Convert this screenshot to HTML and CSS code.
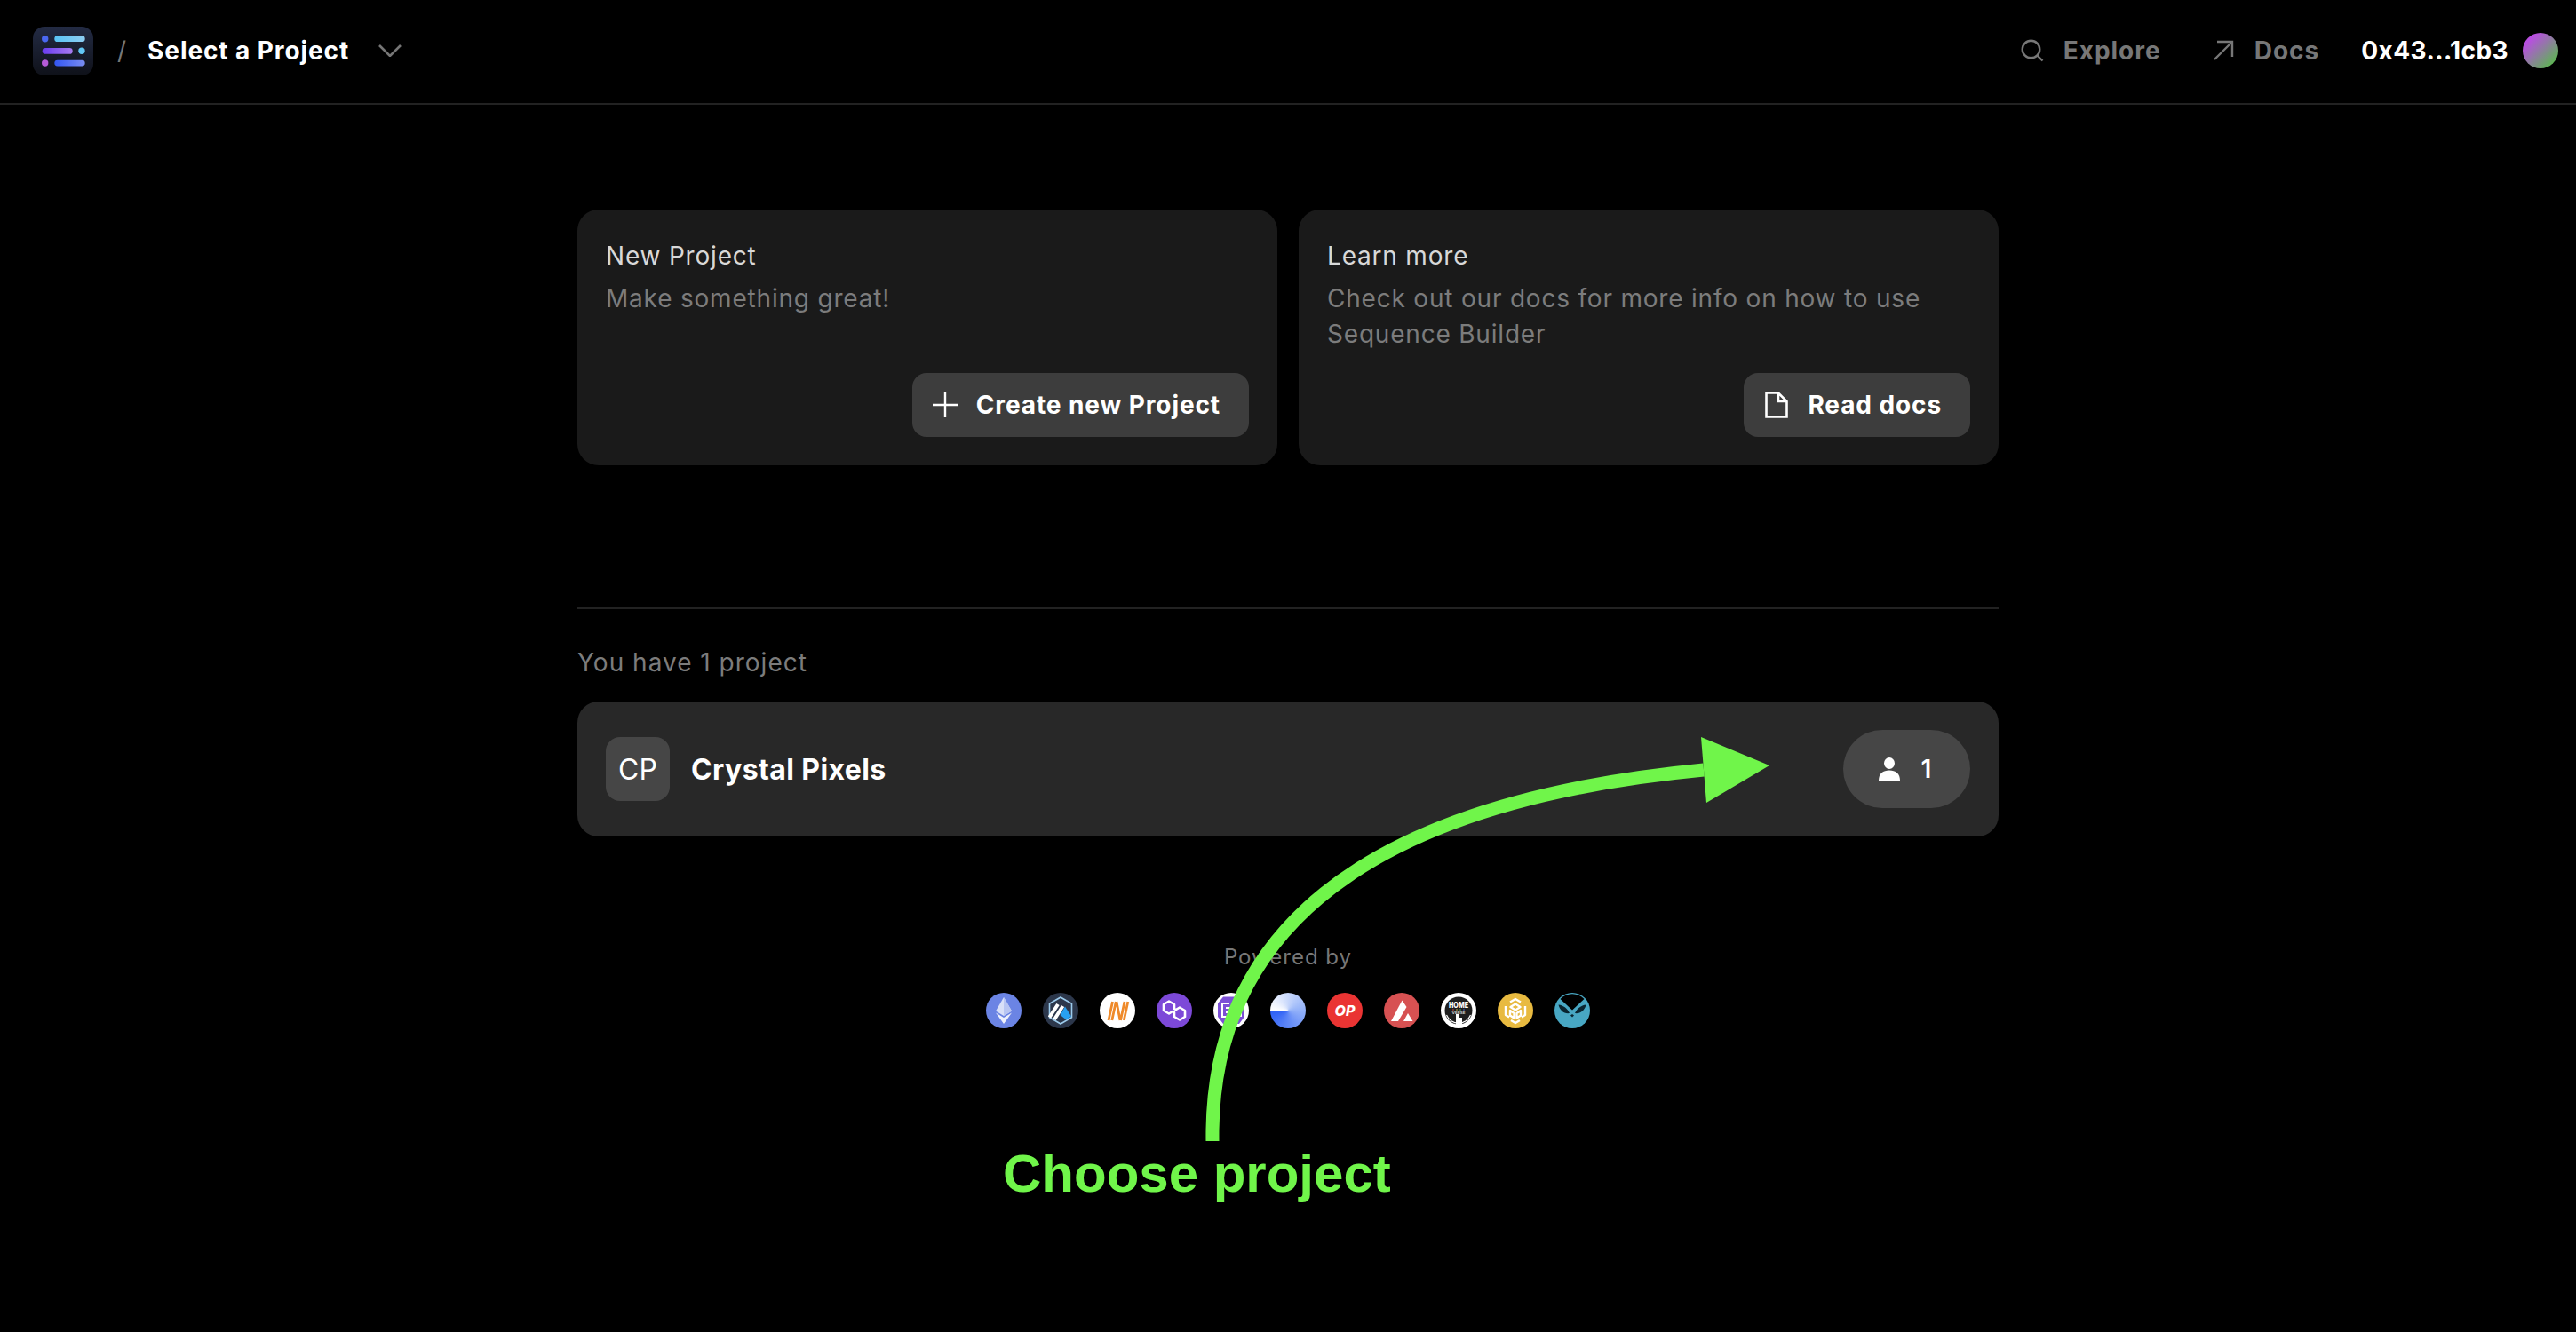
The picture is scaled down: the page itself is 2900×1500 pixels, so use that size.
FILE: index.html
```html
<!DOCTYPE html>
<html lang="en">

<head>
    <meta charset="UTF-8">
    <meta name="viewport" content="width=device-width, initial-scale=1.0">
    <title>Sequence Builder - Select a Project</title>
    <link rel="stylesheet" href="styles.css">
</head>

<body>
    <header class="topbar">
        <div class="topbar-left">
            <svg class="logo" viewBox="0 0 68 55" xmlns="http://www.w3.org/2000/svg">
                <defs>
                    <linearGradient id="logoBg" x1="0" y1="0" x2="0" y2="1">
                        <stop offset="0" stop-color="#232b44" />
                        <stop offset="1" stop-color="#0f1119" />
                    </linearGradient>
                    <linearGradient id="barCyan" x1="0" y1="0" x2="1" y2="0">
                        <stop offset="0" stop-color="#59c4f5" />
                        <stop offset="1" stop-color="#8ecdf2" />
                    </linearGradient>
                    <linearGradient id="barPurple" x1="0" y1="0" x2="1" y2="0">
                        <stop offset="0" stop-color="#6a3cf0" />
                        <stop offset="1" stop-color="#a77bf0" />
                    </linearGradient>
                    <linearGradient id="barBlue" x1="0" y1="0" x2="1" y2="0">
                        <stop offset="0" stop-color="#3356f2" />
                        <stop offset="1" stop-color="#7a8df0" />
                    </linearGradient>
                </defs>
                <rect width="68" height="55" rx="13" fill="url(#logoBg)" />
                <circle cx="13.7" cy="13.7" r="3.7" fill="#4a68f0" />
                <rect x="24.3" y="10.3" width="34.4" height="6.8" rx="3.4" fill="url(#barCyan)" />
                <rect x="10.7" y="24" width="34" height="6.8" rx="3.4" fill="url(#barPurple)" />
                <circle cx="55" cy="27.3" r="3.7" fill="#62c6f4" />
                <circle cx="13.7" cy="41" r="3.7" fill="#b65bd8" />
                <rect x="24.3" y="37.7" width="34.4" height="6.8" rx="3.4" fill="url(#barBlue)" />
            </svg>
            <span class="crumb-slash">/</span>
            <span class="crumb-title">Select a Project</span>
            <svg class="chevron" viewBox="0 0 26 14" xmlns="http://www.w3.org/2000/svg">
                <path d="M1 1 L13 13 L25 1" fill="none" stroke="#767676" stroke-width="2.6" />
            </svg>
        </div>
        <nav class="topbar-right">
            <a class="nav-link" href="#">
                <svg class="nav-icon" viewBox="0 0 26 26" xmlns="http://www.w3.org/2000/svg">
                    <circle cx="11.5" cy="11.5" r="9.8" fill="none" stroke="#777" stroke-width="2.4" />
                    <path d="M18.5 18.5 L24.5 24.5" stroke="#777" stroke-width="2.4" />
                </svg>
                Explore
            </a>
            <a class="nav-link" href="#">
                <svg class="nav-icon" viewBox="0 0 26 26" xmlns="http://www.w3.org/2000/svg">
                    <path d="M3 23 L23 3 M6 3 L23 3 L23 20" fill="none" stroke="#777" stroke-width="2.4" />
                </svg>
                Docs
            </a>
            <div class="wallet">
                <span class="wallet-address">0x43...1cb3</span>
                <span class="wallet-avatar"></span>
            </div>
        </nav>
    </header>

    <main class="content">
        <section class="cards">
            <article class="card">
                <div>
                    <h3 class="card-title">New Project</h3>
                    <p class="card-text">Make something great!</p>
                </div>
                <a class="card-button card-button-create" href="#">
                    <svg class="button-icon" viewBox="0 0 30 30" xmlns="http://www.w3.org/2000/svg">
                        <path d="M15 1 V29 M1 15 H29" stroke="#fff" stroke-width="2.4" />
                    </svg>
                    Create new Project
                </a>
            </article>
            <article class="card">
                <div>
                    <h3 class="card-title">Learn more</h3>
                    <p class="card-text">Check out our docs for more info on how to use<br>Sequence Builder</p>
                </div>
                <a class="card-button card-button-docs" href="#">
                    <svg class="button-icon button-icon-doc" viewBox="0 0 26 30" xmlns="http://www.w3.org/2000/svg">
                        <path d="M1.5 1.5 H15 L24.5 11 V28.5 H1.5 Z M15 1.5 V11 H24.5" fill="none" stroke="#fff" stroke-width="2.6" />
                    </svg>
                    Read docs
                </a>
            </article>
        </section>

        <hr class="divider">

        <p class="project-count">You have 1 project</p>

        <a class="project-row" href="#">
            <div class="project-info">
                <span class="project-tile">CP</span>
                <span class="project-name">Crystal Pixels</span>
            </div>
            <span class="member-pill">
                <svg class="member-icon" viewBox="0 0 24 26" xmlns="http://www.w3.org/2000/svg">
                    <ellipse cx="12" cy="6.5" rx="6" ry="6.5" fill="#fff" />
                    <path d="M0 26 C0 18 5 14.5 12 14.5 C19 14.5 24 18 24 26 Z" fill="#fff" />
                </svg>
                1
            </span>
        </a>

        <footer class="powered">
            <p class="powered-label">Powered by</p>
            <div class="chains">
                <svg class="chain" viewBox="0 0 40 40" xmlns="http://www.w3.org/2000/svg">
                    <circle cx="20" cy="20" r="20" fill="#6b84e4" />
                    <path d="M20 5 L11 20.5 L20 26 L29 20.5 Z" fill="#d9e0f8" />
                    <path d="M20 5 L20 26 L29 20.5 Z" fill="#b8c5f2" />
                    <path d="M11 22.5 L20 35 L29 22.5 L20 28 Z" fill="#eef1fc" />
                </svg>
                <svg class="chain" viewBox="0 0 40 40" xmlns="http://www.w3.org/2000/svg">
                    <circle cx="20" cy="20" r="20" fill="#2c374b" />
                    <path d="M20 5 L32.5 12.2 V27.8 L20 35 L7.5 27.8 V12.2 Z" fill="none" stroke="#9dcced" stroke-width="1.6" />
                    <path d="M7.5 27.5 L17 13 M13 30 L22.5 15" fill="none" stroke="#fff" stroke-width="4" />
                    <path d="M25 15.5 L32 26.5 L26.5 30.5 L19.5 25 Z" fill="#28a0f0" />
                </svg>
                <svg class="chain" viewBox="0 0 40 40" xmlns="http://www.w3.org/2000/svg">
                    <circle cx="20" cy="20" r="20" fill="#fff" />
                    <path d="M10 31 L14.5 10 M13.8 31 L18.3 10 M19 10 L23 31 M23.5 31 L28 10 M27.3 31 L31.8 10" fill="none" stroke="#ef8a2a" stroke-width="2.8" />
                </svg>
                <svg class="chain" viewBox="0 0 40 40" xmlns="http://www.w3.org/2000/svg">
                    <circle cx="20" cy="20" r="20" fill="#7d49d8" />
                    <path d="M14 9.5 L20 13 V18 L22 19 L26 16.5 L32 20 V27 L26 30.5 L20 27 V22 L18 21 L14 23.5 L8 20 V13 Z" fill="none" stroke="#fff" stroke-width="2.6" stroke-linejoin="round" />
                </svg>
                <svg class="chain" viewBox="0 0 40 40" xmlns="http://www.w3.org/2000/svg">
                    <circle cx="20" cy="20" r="20" fill="#fff" />
                    <path d="M11 4.5 H29 L35 12 V27 L29 35 H11 L5 27 V12 Z" fill="#7c4fd6" />
                    <path d="M10 12 H18 M10 12 V27 H18 M14 17 H19 V22 H14 M24 9 H30 V13 M22 14 V26 H31 V19 H26" fill="none" stroke="#fff" stroke-width="2" />
                </svg>
                <span class="chain chain-base"></span>
                <svg class="chain" viewBox="0 0 40 40" xmlns="http://www.w3.org/2000/svg">
                    <circle cx="20" cy="20" r="20" fill="#ea3433" />
                    <text class="chain-op" x="20" y="25.5" text-anchor="middle">OP</text>
                </svg>
                <svg class="chain" viewBox="0 0 40 40" xmlns="http://www.w3.org/2000/svg">
                    <circle cx="20" cy="20" r="20" fill="#d75152" />
                    <path d="M20.5 8.5 L25.5 16 L16 32 H8 Z" fill="#fff" />
                    <path d="M27 23 L32.5 32 H22 Z" fill="#fff" />
                </svg>
                <svg class="chain" viewBox="0 0 40 40" xmlns="http://www.w3.org/2000/svg">
                    <circle cx="20" cy="20" r="20" fill="#fff" />
                    <circle cx="20" cy="20" r="15.5" fill="#1e1e1e" />
                    <path d="M6.5 25 A14.5 14.5 0 0 0 33.5 25" fill="none" stroke="#fff" stroke-width="1.2" />
                    <text class="chain-home" x="20" y="17" text-anchor="middle" textLength="22" lengthAdjust="spacingAndGlyphs">HOME</text>
                    <circle cx="14" cy="19" r="0.8" fill="#e04a4a" />
                    <circle cx="18" cy="19" r="0.8" fill="#e0c04a" />
                    <circle cx="22" cy="19" r="0.8" fill="#4ac06a" />
                    <circle cx="26" cy="19" r="0.8" fill="#4a6ae0" />
                    <text class="chain-verse" x="20" y="23.5" text-anchor="middle" textLength="15" lengthAdjust="spacingAndGlyphs">VERSE</text>
                    <path d="M17 24 H20 V28 H24 V36 H17 Z" fill="#fff" />
                </svg>
                <svg class="chain" viewBox="0 0 40 40" xmlns="http://www.w3.org/2000/svg">
                    <circle cx="20" cy="20" r="20" fill="#e8ba40" />
                    <path d="M14 10.5 L20 7 L26 10.5 M14.5 16 L20 12.5 L25.5 16 L20 19.5 Z M9 15 V25 L13 27.5 M31 15 V25 L27 27.5 M14 20 V25.5 L18.5 28.5 V23 Z M26 20 V25.5 L21.5 28.5 V23 Z M15 31 L20 34 L25 31" fill="none" stroke="#fff" stroke-width="2.4" stroke-linejoin="round" />
                </svg>
                <svg class="chain" viewBox="0 0 40 40" xmlns="http://www.w3.org/2000/svg">
                    <circle cx="20" cy="20" r="20" fill="#48a7c3" />
                    <path d="M6.5 7 A18.5 18.5 0 0 1 33.5 7 L20 19.5 Z" fill="#000" />
                    <path d="M4.5 13.5 C10 14 15 18 17 23 C11 24 6 20 4.5 13.5 Z M35.5 13.5 C30 14 25 18 23 23 C29 24 34 20 35.5 13.5 Z M18 25.5 L20 27.5 L22 25.5 L20 24 Z" fill="#0a2530" />
                </svg>
            </div>
        </footer>
    </main>

    <!-- annotation drawn on top of the screenshot -->
    <svg class="annotation-arrow" viewBox="0 0 2900 1500" xmlns="http://www.w3.org/2000/svg">
        <path d="M1365 1285 C1362 1060 1520 905 1918 867" fill="none" stroke="#70f54a" stroke-width="15" />
        <path d="M1915 830 L1992 862 L1921 904 Z" fill="#70f54a" />
    </svg>
    <div class="annotation-label">Choose project</div>
</body>

</html>
```

FILE: styles.css
```css
* {
    margin: 0;
    padding: 0;
    box-sizing: border-box;
}

body {
    position: relative;
    height: 1500px;
    overflow: hidden;
    background-color: #000;
    color: #fff;
    font-family: Inter, "Liberation Sans", sans-serif;
}

a {
    color: inherit;
    text-decoration: none;
}

/* Top bar */
.topbar {
    display: flex;
    align-items: center;
    justify-content: space-between;
    height: 118px;
    padding: 0 20px 2px 37px;
    border-bottom: 2px solid #222;
}

.topbar-left,
.topbar-right {
    display: flex;
    align-items: center;
}

.logo {
    width: 68px;
    height: 55px;
}

.crumb-slash {
    margin-left: 27px;
    color: #777;
    font-size: 28px;
}

.crumb-title {
    margin-left: 24px;
    font-size: 28px;
    font-weight: 700;
    letter-spacing: 0.9px;
}

.chevron {
    width: 26px;
    height: 14px;
    margin-left: 33px;
}

.nav-link {
    display: flex;
    align-items: center;
    gap: 22px;
    margin-right: 47px;
    color: #777;
    font-size: 28px;
    font-weight: 700;
    letter-spacing: 1px;
}

.nav-link:first-child {
    margin-right: 57px;
}

.nav-icon {
    width: 26px;
    height: 26px;
}

.wallet {
    display: flex;
    align-items: center;
    gap: 16px;
}

.wallet-address {
    font-size: 28px;
    font-weight: 700;
    letter-spacing: 0.4px;
}

.wallet-avatar {
    width: 40px;
    height: 40px;
    border-radius: 50%;
    background: linear-gradient(135deg, #b84fe0 20%, #5fb256 85%);
}

/* Main column */
.content {
    width: 1600px;
    margin: 118px auto 0;
}

.cards {
    display: flex;
    gap: 24px;
}

.card {
    display: flex;
    flex: 1;
    flex-direction: column;
    justify-content: space-between;
    height: 288px;
    padding: 32px;
    border-radius: 24px;
    background-color: #1a1a1a;
}

.card-title {
    color: #d8d8d8;
    font-size: 28px;
    font-weight: 400;
    line-height: 40px;
    letter-spacing: 0.8px;
}

.card-text {
    margin-top: 8px;
    color: #7c7c7c;
    font-size: 28px;
    font-weight: 400;
    line-height: 40px;
    letter-spacing: 0.8px;
}

.card-button {
    display: flex;
    align-items: center;
    align-self: flex-end;
    gap: 20px;
    height: 72px;
    padding: 0 32px 0 22px;
    border-radius: 16px;
    background-color: #3d3d3d;
    font-size: 28px;
    font-weight: 700;
    letter-spacing: 0.9px;
}

.button-icon {
    width: 30px;
    height: 30px;
}

.button-icon-doc {
    width: 26px;
}

.card-button-docs {
    gap: 22px;
    padding-left: 24px;
}

.divider {
    height: 2px;
    margin-top: 160px;
    border: 0;
    background-color: #222;
}

.project-count {
    margin-top: 40px;
    color: #7c7c7c;
    font-size: 28px;
    line-height: 40px;
    letter-spacing: 1px;
}

.project-row {
    display: flex;
    align-items: center;
    justify-content: space-between;
    height: 152px;
    margin-top: 24px;
    padding: 0 32px;
    border-radius: 24px;
    background-color: #282828;
}

.project-info {
    display: flex;
    align-items: center;
    gap: 24px;
}

.project-tile {
    display: flex;
    align-items: center;
    justify-content: center;
    width: 72px;
    height: 72px;
    border-radius: 16px;
    background-color: #464646;
    font-size: 32px;
}

.project-name {
    font-size: 32px;
    font-weight: 700;
    letter-spacing: 0.4px;
}

.member-pill {
    display: flex;
    align-items: center;
    justify-content: center;
    gap: 24px;
    width: 143px;
    height: 88px;
    padding-right: 4px;
    border-radius: 44px;
    background-color: #464646;
    font-size: 28px;
    font-weight: 600;
}

.member-icon {
    width: 24px;
    height: 26px;
}

/* Powered by */
.powered {
    display: flex;
    flex-direction: column;
    align-items: center;
    gap: 24px;
    margin-top: 120px;
}

.powered-label {
    color: #777;
    font-size: 24px;
    line-height: 32px;
    letter-spacing: 1px;
}

.chains {
    display: flex;
    gap: 24px;
}

.chain {
    display: block;
    width: 40px;
    height: 40px;
}

.chain-base {
    border-radius: 50%;
    background: conic-gradient(from 270deg, #fff 0, #9db9f9 45%, #2c5ff6 100%);
}

.chain-op {
    fill: #fff;
    font-size: 16px;
    font-weight: 800;
    font-style: italic;
}

.chain-home {
    fill: #fff;
    font-size: 9px;
    font-weight: 800;
}

.chain-verse {
    fill: #cfcfcf;
    font-size: 3.5px;
    font-weight: 700;
}

/* Annotation over the page */
.annotation-arrow {
    position: absolute;
    top: 0;
    left: 0;
    width: 2900px;
    height: 1500px;
}

.annotation-label {
    position: absolute;
    top: 1288px;
    left: 1129px;
    color: #70f54a;
    font-family: "Liberation Sans", Arial, sans-serif;
    font-size: 60px;
    font-weight: 700;
    line-height: 68px;
    white-space: nowrap;
}
```
